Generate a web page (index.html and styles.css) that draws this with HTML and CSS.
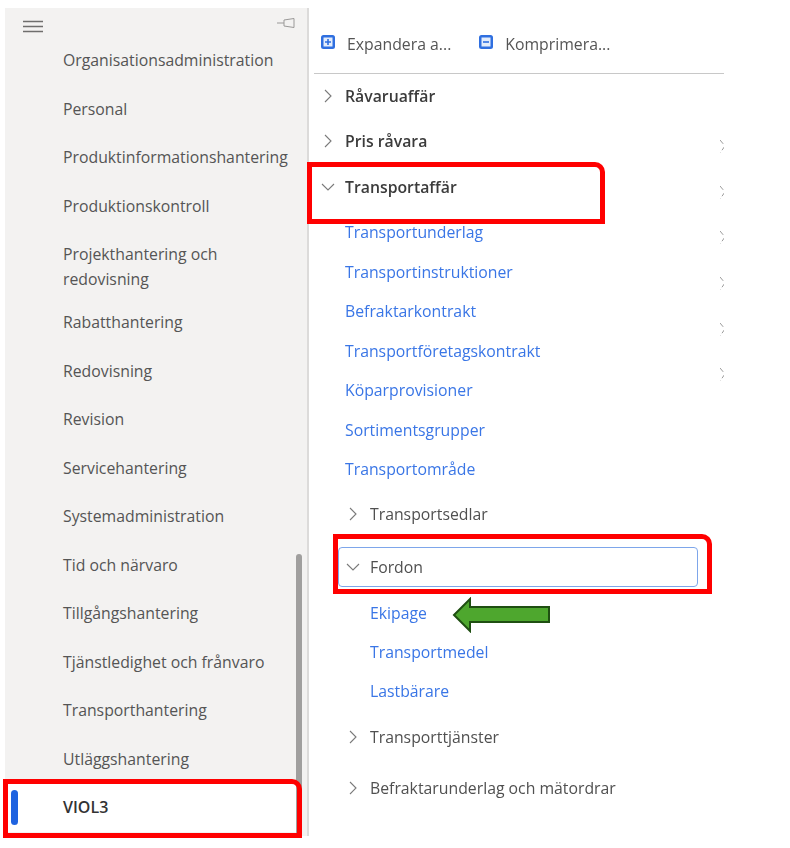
FILE: index.html
```html
<!DOCTYPE html>
<html lang="en">
<head>
    <meta charset="UTF-8">
    <title>Moduler</title>
    <link rel="stylesheet" href="styles.css">
</head>
<body>
    <div class="page">
        <nav class="sidebar">
            <div class="sidebar-top">
                <svg class="burger" width="20" height="14" viewBox="0 0 20 14"><path d="M0 1.5h20M0 6.5h20M0 11.5h20" stroke="#6f6e6d" stroke-width="1.4" fill="none"/></svg>
                <svg class="pin" width="18" height="12" viewBox="0 0 18 12"><path d="M0 6h7M7 3l10-1.5v9L7 9z" stroke="#9a9998" stroke-width="1" fill="none"/></svg>
            </div>
            <ul class="module-list">
                <li class="module">Organisationsadministration</li>
                <li class="module">Personal</li>
                <li class="module">Produktinformationshantering</li>
                <li class="module">Produktionskontroll</li>
                <li class="module module-wrap">Projekthantering och<br>redovisning</li>
                <li class="module">Rabatthantering</li>
                <li class="module">Redovisning</li>
                <li class="module">Revision</li>
                <li class="module">Servicehantering</li>
                <li class="module">Systemadministration</li>
                <li class="module">Tid och närvaro</li>
                <li class="module">Tillgångshantering</li>
                <li class="module">Tjänstledighet och frånvaro</li>
                <li class="module">Transporthantering</li>
                <li class="module">Utläggshantering</li>
                <li class="module module-active"><span class="active-bar"></span>VIOL3</li>
            </ul>
            <div class="scrollbar"></div>
        </nav>

        <main class="content">
            <div class="toolbar">
                <button class="tool">
                    <svg width="16" height="16" viewBox="0 0 16 16"><rect x="1" y="1" width="14" height="14" rx="2.5" fill="#2f6fe0"/><rect x="3.5" y="3.5" width="9" height="9" fill="#e4edfb"/><path d="M8 5v6M5 8h6" stroke="#2f6fe0" stroke-width="1.6"/></svg>
                    Expandera a...
                </button>
                <button class="tool">
                    <svg width="16" height="16" viewBox="0 0 16 16"><rect x="1" y="1" width="14" height="14" rx="2.5" fill="#2f6fe0"/><rect x="3.5" y="3.5" width="9" height="9" fill="#e4edfb"/><path d="M5 8h6" stroke="#2f6fe0" stroke-width="1.6"/></svg>
                    Komprimera...
                </button>
            </div>

            <div class="tree">
                <div class="row group">
                    <svg class="chev" width="16" height="16" viewBox="0 0 16 16"><path d="M5 2l6 6-6 6"/></svg>
                    Råvaruaffär
                </div>
                <div class="row group">
                    <svg class="chev" width="16" height="16" viewBox="0 0 16 16"><path d="M5 2l6 6-6 6"/></svg>
                    Pris råvara
                </div>
                <div class="row group">
                    <svg class="chev" width="16" height="16" viewBox="0 0 16 16"><path d="M2 5l6 6 6-6"/></svg>
                    Transportaffär
                </div>
                <a class="link link-top">Transportunderlag</a>
                <a class="link">Transportinstruktioner</a>
                <a class="link">Befraktarkontrakt</a>
                <a class="link">Transportföretagskontrakt</a>
                <a class="link">Köparprovisioner</a>
                <a class="link">Sortimentsgrupper</a>
                <a class="link">Transportområde</a>
                <div class="row sub sub-sedlar">
                    <svg class="chev" width="16" height="16" viewBox="0 0 16 16"><path d="M5 2l6 6-6 6"/></svg>
                    Transportsedlar
                </div>
                <div class="row sub sub-focus">
                    <svg class="chev" width="16" height="16" viewBox="0 0 16 16"><path d="M2 5l6 6 6-6"/></svg>
                    Fordon
                </div>
                <a class="link link-sub link-first">Ekipage</a>
                <a class="link link-sub">Transportmedel</a>
                <a class="link link-sub">Lastbärare</a>
                <div class="row sub sub-tjanster">
                    <svg class="chev" width="16" height="16" viewBox="0 0 16 16"><path d="M5 2l6 6-6 6"/></svg>
                    Transporttjänster
                </div>
                <div class="row sub sub-befr">
                    <svg class="chev" width="16" height="16" viewBox="0 0 16 16"><path d="M5 2l6 6-6 6"/></svg>
                    Befraktarunderlag och mätordrar
                </div>
            </div>

            <div class="clipped">
                <svg width="4" height="16" viewBox="0 0 4 16"><path d="M0 1l5 6-5 7"/></svg>
                <svg width="4" height="16" viewBox="0 0 4 16"><path d="M0 1l5 6-5 7"/></svg>
                <svg width="4" height="16" viewBox="0 0 4 16"><path d="M0 1l5 6-5 7"/></svg>
                <svg width="4" height="16" viewBox="0 0 4 16"><path d="M0 1l5 6-5 7"/></svg>
                <svg width="4" height="16" viewBox="0 0 4 16"><path d="M0 1l5 6-5 7"/></svg>
                <svg width="4" height="16" viewBox="0 0 4 16"><path d="M0 1l5 6-5 7"/></svg>
            </div>
        </main>
    </div>

    <!-- annotations on top of the screenshot -->
    <div class="mark mark-affar"></div>
    <div class="mark mark-fordon"></div>
    <div class="mark mark-viol"></div>
    <svg class="arrow" width="100" height="36" viewBox="0 0 100 36"><path d="M2 18L18 2v8h79v15H18v9z" fill="#4ea72e" stroke="#1f4f12" stroke-width="2"/></svg>
</body>
</html>
```

FILE: styles.css
```css
* {
    margin: 0;
    padding: 0;
    box-sizing: border-box;
    font-family: 'Open Sans', 'Noto Sans', sans-serif;
}

body {
    background: #fff;
    width: 790px;
    height: 848px;
    overflow: hidden;
    position: relative;
    color: #505050;
    filter: blur(0.35px);
}

.page {
    display: flex;
    padding: 8px 0 0 5px;
    height: 836px;
}

/* left nav */
.sidebar {
    width: 304px;
    background: #f3f2f1;
    border-right: 2px solid #dcdbda;
    position: relative;
    flex-shrink: 0;
}

.sidebar-top {
    height: 28px;
    display: flex;
    justify-content: space-between;
    padding: 12px 12px 0 18px;
}

.pin {
    margin-top: -3px;
}

.module-list {
    list-style: none;
}

.module {
    height: 48.5px;
    display: flex;
    align-items: center;
    padding-left: 58px;
    font-size: 15.8px;
    color: #555;
    position: relative;
}

.module-wrap {
    display: block;
    height: 68px;
    padding-top: 12px;
    line-height: 25px;
}

.module-active {
    background: #fff;
    color: #333;
    font-size: 16px;
    font-weight: 600;
    margin-right: 8px;
}

.active-bar {
    position: absolute;
    left: 6px;
    top: 7px;
    width: 7px;
    height: 35px;
    border-radius: 4px;
    background: #1f63e0;
}

.scrollbar {
    position: absolute;
    right: 5px;
    top: 546px;
    bottom: 0;
    width: 6px;
    border-radius: 3px 3px 0 0;
    background: #a09f9e;
}

/* right panel */
.content {
    margin-left: 5px;
    width: 410px;
    position: relative;
}

.toolbar {
    display: flex;
    gap: 27px;
    height: 66px;
    padding: 21px 0 0 6px;
    border-bottom: 1px solid #c8c8c8;
}

.tool {
    display: flex;
    align-items: flex-start;
    gap: 11px;
    height: 30px;
    border: none;
    background: none;
    color: #555;
    font-size: 15.8px;
    line-height: 30px;
}

.tool svg {
    margin-top: 5px;
}

.tree {
    display: flex;
    flex-direction: column;
    margin-top: -1px;
}

.row {
    display: flex;
    align-items: center;
    height: 45.5px;
    gap: 9px;
    padding-left: 6px;
    font-size: 15.8px;
}

.chev {
    fill: none;
    stroke: #7a7a7a;
    stroke-width: 1.1;
}

.group {
    font-weight: 600;
    color: #3b3b3b;
}

.link {
    display: flex;
    align-items: center;
    height: 39.5px;
    padding-left: 31px;
    color: #3a76e6;
    font-size: 15.8px;
}

.link-top {
    margin-top: 3px;
}

.link-sub {
    height: 39px;
    padding-left: 56px;
}

.link-first {
    margin-top: 6px;
}

.sub {
    padding-left: 31px;
}

.sub-sedlar {
    height: 50px;
    margin-bottom: 8px;
}

.sub-focus {
    width: 360px;
    height: 40px;
    margin-left: 24px;
    padding-left: 6px;
    border: 1px solid #7ea6ea;
    border-radius: 4px;
}

.sub-tjanster {
    height: 52px;
    margin-top: 1px;
}

.sub-befr {
    height: 50px;
}

.clipped {
    position: absolute;
    right: 0;
    top: 131px;
    display: flex;
    flex-direction: column;
    gap: 29.7px;
}

.clipped svg {
    fill: none;
    stroke: #9a9a9a;
    stroke-width: 1;
    stroke-dasharray: 5 3;
}

/* annotations */
.mark {
    position: absolute;
    border: 5px solid #f00;
    border-radius: 0 10px 0 0;
}

.mark-affar {
    left: 307px;
    top: 162px;
    width: 298px;
    height: 62px;
}

.mark-fordon {
    left: 333px;
    top: 534px;
    width: 379px;
    height: 60px;
}

.mark-viol {
    left: 3px;
    top: 779px;
    width: 299px;
    height: 59px;
}

.arrow {
    position: absolute;
    left: 452px;
    top: 597px;
}
```
